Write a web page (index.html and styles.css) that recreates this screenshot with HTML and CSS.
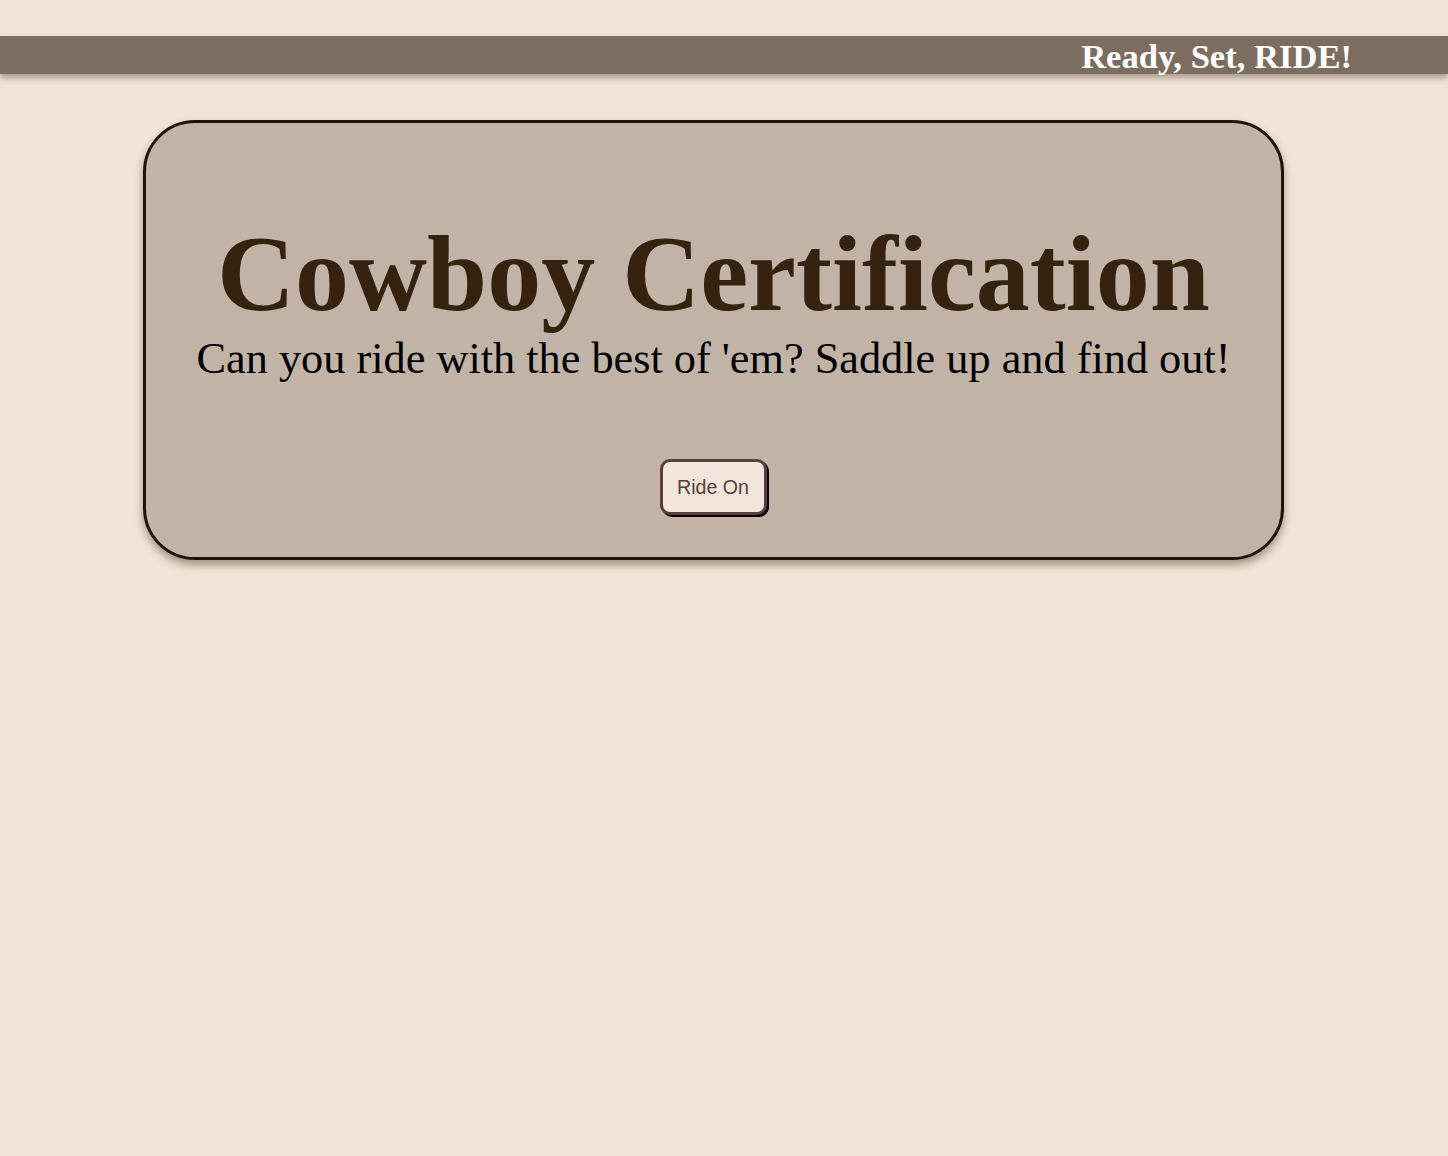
FILE: index.html
```html
<!DOCTYPE html>
<html>
<head>
<meta charset="utf-8">
<link rel="stylesheet" href="styles.css">
</head>
<body>
<header class="topbar">
  <span class="topbar-title">Ready, Set, RIDE!</span>
</header>
<main class="card">
  <h1 class="card-title">Cowboy Certification</h1>
  <p class="card-sub">Can you ride with the best of 'em? Saddle up and find out!</p>
  <button class="ride-btn">Ride On</button>
</main>
</body>
</html>
```

FILE: styles.css
```css
html, body {
  margin: 0;
  padding: 0;
  background: #f0e4d7;
  font-family: "Liberation Serif", "Times New Roman", serif;
}
body {
  padding-top: 36px;
  min-height: 1120px;
}
.topbar {
  height: 38px;
  background: #7b6e61;
  display: flex;
  justify-content: flex-end;
  align-items: center;
  padding-right: 96px;
  box-shadow: 0 4px 6px rgba(90, 70, 50, 0.45);
}
.topbar-title {
  color: #fff;
  font-weight: bold;
  font-size: 34.6px;
  line-height: 38px;
  padding-top: 2px;
}
.card {
  width: 1135px;
  margin: 46px 0 0 143px;
  height: 434px;
  background: #c1b4a7;
  border: 3px solid #1d140b;
  border-radius: 52px;
  box-shadow: 0 5px 8px rgba(70, 45, 20, 0.45);
  display: flex;
  flex-direction: column;
  align-items: center;
}
.card-title {
  margin: 96px 0 0;
  font-size: 108px;
  font-weight: bold;
  line-height: 110px;
  color: #36230f;
}
.card-sub {
  margin: 5px 0 0;
  font-size: 44.3px;
  line-height: 50px;
  color: #000;
}
.ride-btn {
  margin-top: 75px;
  margin-right: 1px;
  width: 107px;
  height: 56px;
  background: #f2e6dc;
  border: 3px solid #5b3d3d;
  border-radius: 10px;
  box-shadow: 2px 2px 0 #000;
  font-family: "Liberation Sans", Arial, sans-serif;
  font-size: 19.6px;
  color: #5b3d3d;
  padding: 0;
  cursor: pointer;
}
```
